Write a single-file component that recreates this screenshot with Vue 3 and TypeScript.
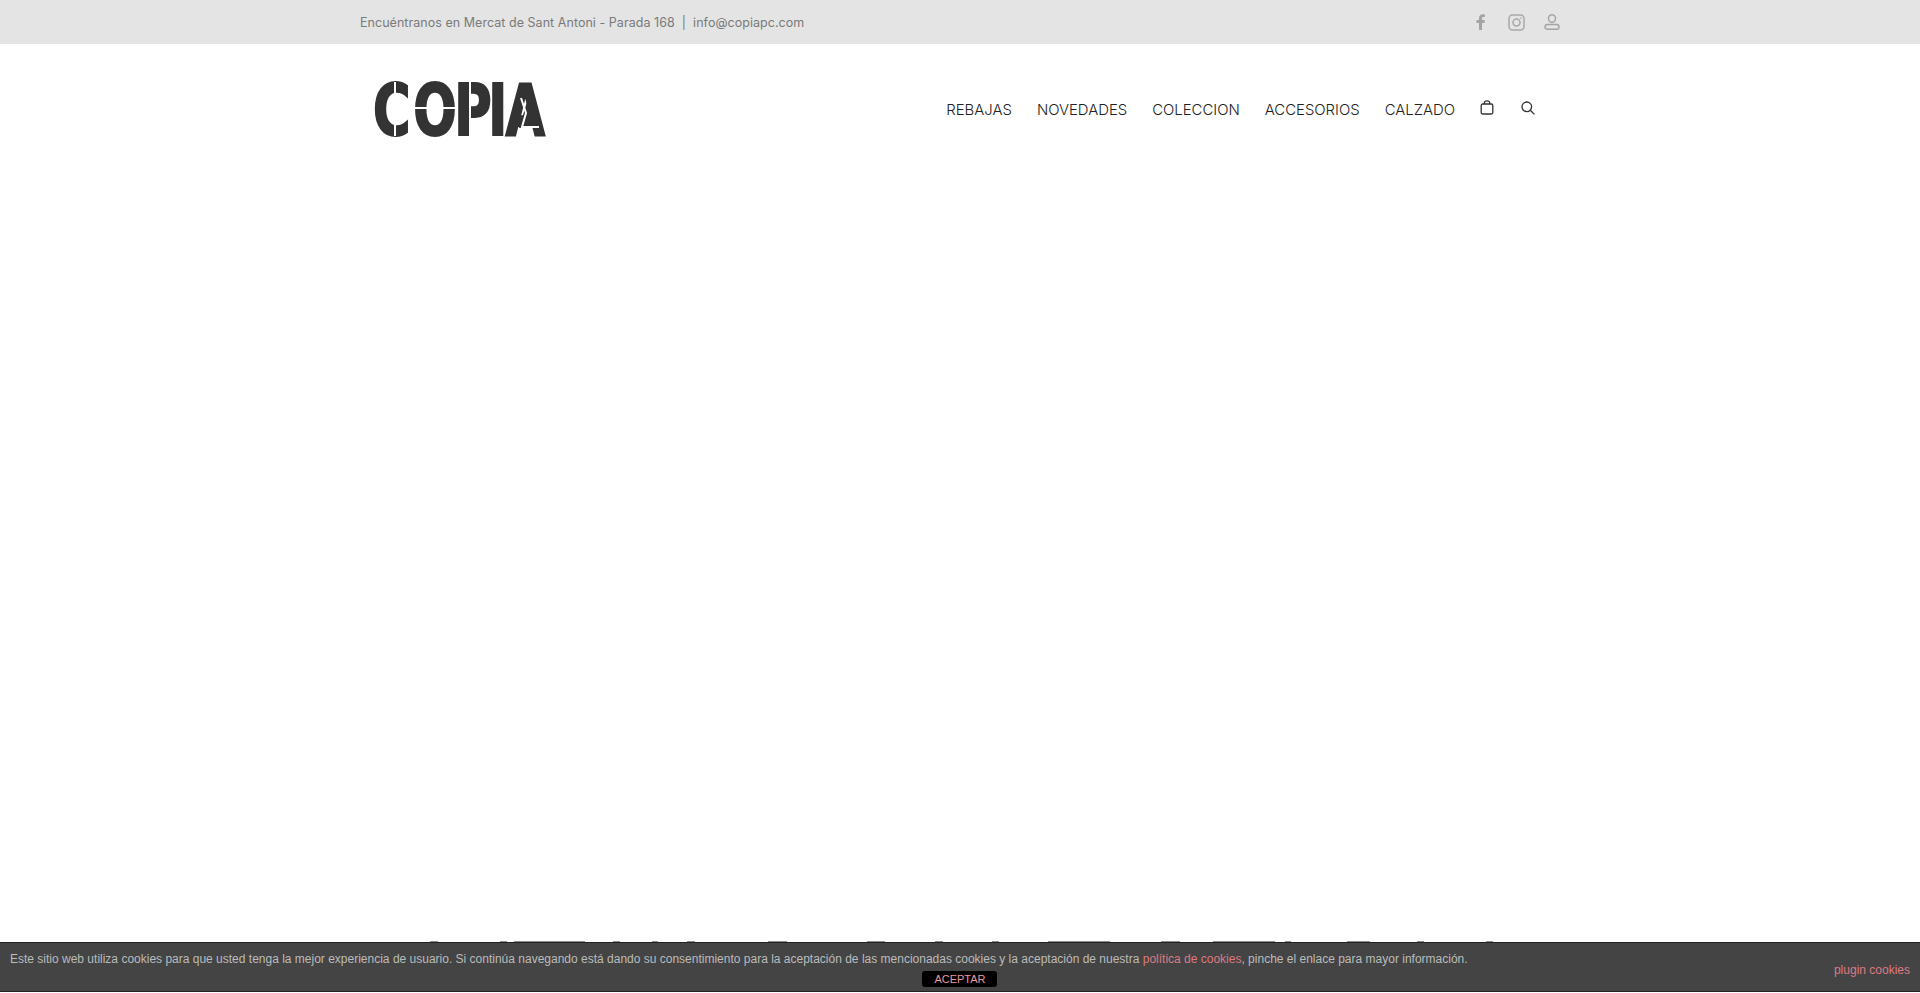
<script setup lang="ts">
interface Sliver {
  gap: number
  width: number
}

const navItems = ['REBAJAS', 'NOVEDADES', 'COLECCION', 'ACCESORIOS', 'CALZADO']

// tops of the big heading letters that stick out above the cookie banner
const sliverRanges: [number, number][] = [
  [430, 438], [500, 507], [514, 585], [613, 620], [652, 658], [687, 695], [768, 787], [867, 885],
  [935, 943], [992, 999], [1048, 1110], [1161, 1180], [1213, 1275], [1285, 1291], [1347, 1370],
  [1417, 1424], [1486, 1493],
]

const slivers: Sliver[] = sliverRanges.map(([from, to], i) => ({
  gap: from - (i === 0 ? 0 : sliverRanges[i - 1][1]),
  width: to - from,
}))
</script>

<template>
  <div class="page">
    <div class="top-bar">
      <div class="top-inner">
        <p class="contact">Encuéntranos en Mercat de Sant Antoni - Parada 168 &nbsp;|&nbsp; info@copiapc.com</p>
        <div class="social">
          <svg class="icon-f" viewBox="0 0 9 16" width="9" height="16">
            <path d="M6 16V8.900h2.400l.4-2.900H6V4.400c0-.9.2-1.400 1.400-1.400h1.500V.4C8.500.3 7.700.2 6.800.2 4.700.2 3 1.500 3 4v2H.5v2.900H3V16z" fill="#a4a4a4" />
          </svg>
          <svg viewBox="0 0 17 17" width="17" height="17" fill="none" stroke="#a8a8a8" stroke-width="1.500">
            <rect x="1" y="1" width="15" height="15" rx="3.500" />
            <circle cx="8.500" cy="8.500" r="3.500" />
            <circle cx="12.800" cy="4.200" r=".8" fill="#a8a8a8" stroke="none" />
          </svg>
          <svg viewBox="0 0 16 16" width="16" height="16" fill="none" stroke="#a4a4a4" stroke-width="1.400">
            <ellipse cx="8" cy="4.500" rx="3.500" ry="3.800" />
            <rect x="1" y="10.500" width="14" height="4.800" rx="2.400" />
          </svg>
        </div>
      </div>
    </div>

    <header class="header">
      <div class="header-inner">
        <svg class="logo" viewBox="0 0 180 54" width="180" height="54" role="img" aria-label="COPIA">
          <text class="logo-text" transform="scale(.72 1)" y="53" x="0 56 113 160 184">COPIA</text>
          <polygon points="154,20 162,46 146,46" fill="#333" />
          <g stroke="#fff" stroke-width="2" fill="none">
            <line x1="22" y1="0" x2="22" y2="54" />
            <line x1="42" y1="26" x2="84" y2="26" />
            <line x1="97" y1="0" x2="97" y2="54" />
            <polyline points="148,16 153,31 149,45 166,45" />
          </g>
        </svg>
        <nav class="nav">
          <a v-for="item in navItems" :key="item" class="nav-link">{{ item }}</a>
          <svg class="nav-icon bag" viewBox="0 0 14 15" width="14" height="15" fill="none" stroke="#333" stroke-width="1.300">
            <rect x="1.200" y="4" width="11.600" height="10" rx="1.500" />
            <path d="M4.300 4V2.800C4.300 1.500 5.500.8 7 .8s2.700.7 2.700 2V4" />
          </svg>
          <svg class="nav-icon" viewBox="0 0 14 14" width="14" height="14" fill="none" stroke="#333" stroke-width="1.300">
            <circle cx="5.800" cy="5.800" r="4.800" />
            <line x1="9.300" y1="9.300" x2="13.400" y2="13.400" />
          </svg>
        </nav>
      </div>
    </header>

    <main class="hero"></main>

    <div class="sliver-strip">
      <span
        v-for="(s, i) in slivers"
        :key="i"
        class="sliver"
        :style="{ marginLeft: s.gap + 'px', width: s.width + 'px' }"
      ></span>
    </div>

    <div class="cookie-banner">
      <div class="cookie-main">
        <p class="cookie-text">
          Este sitio web utiliza cookies para que usted tenga la mejor experiencia de usuario. Si continúa navegando está dando su consentimiento para la aceptación de las mencionadas cookies y la aceptación de nuestra <a class="cookie-link">política de cookies</a>, pinche el enlace para mayor información.
        </p>
        <button class="cookie-accept">ACEPTAR</button>
      </div>
      <a class="cookie-plugin">plugin cookies</a>
    </div>
  </div>
</template>

<style>
html,
body {
  margin: 0;
  background: #fff;
}
</style>

<style scoped>
* {
  box-sizing: border-box;
}

.page {
  position: relative;
  display: flex;
  flex-direction: column;
  height: 100vh;
  overflow: hidden;
  background: #fff;
  font-family: Inter, 'Liberation Sans', sans-serif;
}

/* Top bar */
.top-bar {
  flex-shrink: 0;
  height: 44px;
  background: #e4e4e4;
}

.top-inner {
  display: flex;
  justify-content: space-between;
  align-items: center;
  width: 1200px;
  height: 100%;
  margin: 0 auto;
}

.contact {
  margin: 0;
  font-size: 12.5px;
  letter-spacing: 0.04px;
  color: #7a7a7a;
}

.social {
  display: flex;
  align-items: center;
  gap: 19px;
}

.icon-f {
  margin-right: 4px;
}

/* Header */
.header {
  flex-shrink: 0;
  height: 130px;
}

.header-inner {
  display: flex;
  justify-content: space-between;
  align-items: flex-start;
  width: 1200px;
  margin: 0 auto;
  padding: 38px 25px 0 13px;
}

.logo {
  display: block;
  overflow: visible;
}

.logo-text {
  font-family: 'DejaVu Sans', sans-serif;
  font-weight: 700;
  font-size: 71px;
  fill: #333;
  stroke: #333;
  stroke-width: 2px;
}

.nav {
  display: flex;
  align-items: center;
  gap: 25px;
  margin-top: 19px;
}

.nav-link {
  font-size: 14.9px;
  font-weight: 300;
  color: #222;
}

.nav-icon {
  display: block;
  margin-top: -5px;
}

.bag {
  margin-right: 2px;
}

.hero {
  flex-shrink: 0;
  height: 767px;
}

/* Heading tops peeking out over the banner */
.sliver-strip {
  display: flex;
  flex-shrink: 0;
  height: 2px;
}

.sliver {
  flex-shrink: 0;
  height: 100%;
  background: #8d8d8d;
}

/* Cookie banner */
.cookie-banner {
  position: absolute;
  left: 0;
  right: 0;
  top: 942px;
  display: flex;
  justify-content: space-between;
  align-items: flex-start;
  height: 50px;
  padding: 9px 10px 0;
  background: #444;
  border-top: 1px solid #222;
  border-bottom: 1px solid #222;
  font-family: 'Liberation Sans', Arial, sans-serif;
}

.cookie-main {
  display: flex;
  flex-direction: column;
  flex: 1;
  align-items: center;
}

.cookie-text {
  align-self: flex-start;
  margin: 0;
  font-size: 12px;
  line-height: 14px;
  color: #bbb;
}

.cookie-link,
.cookie-plugin {
  color: #dd7a82;
}

.cookie-plugin {
  margin-top: 11px;
  font-size: 12px;
  line-height: 14px;
}

.cookie-accept {
  width: 75px;
  height: 16px;
  margin-top: 5px;
  margin-left: 76px;
  padding: 0;
  border: none;
  border-radius: 3px;
  background: #000;
  color: #e89aa0;
  font-family: inherit;
  font-size: 11px;
  line-height: 16px;
}
</style>
